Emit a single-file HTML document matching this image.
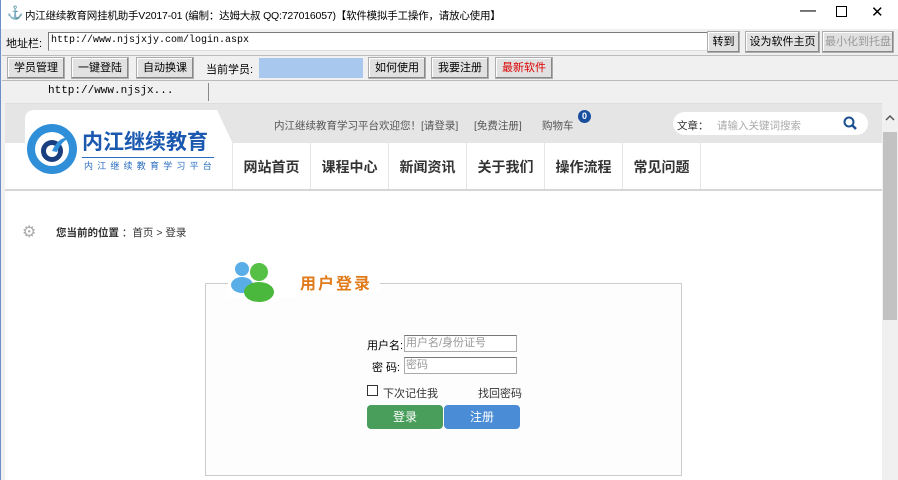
<!DOCTYPE html><html><head><meta charset="utf-8"><style>
*{margin:0;padding:0;box-sizing:border-box}
body{width:898px;height:480px;overflow:hidden;background:#f0f0f0;font-family:"Liberation Sans","Noto Sans CJK SC",sans-serif;font-size:12px;color:#000;position:relative}
.a{position:absolute;white-space:nowrap}
.btn{position:absolute;white-space:nowrap;height:22px;border:1px solid #adadad;background:#e1e1e1;box-shadow:inset -1px -1px 0 #888,inset 1px 1px 0 #fff;text-align:center;line-height:20px;font-size:11px;overflow:hidden}
.nav{position:absolute;top:143px;height:47px;width:78px;border-right:1px solid #e6e6e6;font-size:14px;font-weight:bold;color:#333;text-align:center;line-height:48px}
.gs{color:#555;font-size:10.5px}
</style></head><body>
<div class="a" style="left:0;top:0;width:898px;height:29px;background:#fff"></div>
<div class="a" style="left:0;top:0;width:1px;height:480px;background:#6a8fc8"></div>
<div class="a" style="left:7px;top:5px;font-size:13px;color:#1a4fa0">⚓</div>
<div class="a" style="left:25px;top:8px;font-size:10.5px;letter-spacing:-0.2px">内江继续教育网挂机助手V2017-01 (编制：达姆大叔 QQ:727016057)【软件模拟手工操作，请放心使用】</div>
<div class="a" style="left:800px;top:2px;font-size:16px">—</div>
<div class="a" style="left:836px;top:6px;width:11px;height:11px;border:1px solid #000"></div>
<div class="a" style="left:871px;top:3px;font-size:15px">✕</div>
<div class="a" style="left:6px;top:35px;font-size:11px">地址栏:</div>
<div class="a" style="left:48px;top:32px;width:660px;height:19px;background:#fff;border:1px solid #7a7a7a;border-right-color:#ddd;border-bottom-color:#ddd;font-family:'Liberation Mono',monospace;font-size:10px;padding:2px 2px">http://www.njsjxjy.com/login.aspx</div>
<div class="btn" style="left:707px;top:31px;width:33px">转到</div>
<div class="btn" style="left:745px;top:31px;width:75px">设为软件主页</div>
<div class="btn" style="left:822px;top:31px;width:72px;color:#999">最小化到托盘</div>
<div class="a" style="left:2px;top:55px;width:896px;height:26px;border-top:1px solid #bbb;border-bottom:1px solid #bbb"></div>
<div class="btn" style="left:7px;top:57px;width:58px">学员管理</div>
<div class="btn" style="left:71px;top:57px;width:58px">一键登陆</div>
<div class="btn" style="left:136px;top:57px;width:58px">自动换课</div>
<div class="a" style="left:206px;top:61px;font-size:11px">当前学员:</div>
<div class="a" style="left:259px;top:58px;width:104px;height:20px;background:#a8c8ee"></div>
<div class="btn" style="left:368px;top:57px;width:58px">如何使用</div>
<div class="btn" style="left:431px;top:57px;width:58px">我要注册</div>
<div class="btn" style="left:495px;top:57px;width:58px;color:#d00">最新软件</div>
<div class="a" style="left:48px;top:85px;font-family:'Liberation Mono',monospace;font-size:11px">http://www.njsjx...</div>
<div class="a" style="left:208px;top:83px;width:1px;height:18px;background:#888"></div>
<div class="a" style="left:5px;top:103px;width:877px;height:377px;background:#fff;border-top:1px solid #ddd"></div>
<div class="a" style="left:5px;top:104px;width:877px;height:39px;background:#e5e5e5"></div>
<svg class="a" style="left:5px;top:104px" width="240" height="88"><path d="M20 88 L20 14 Q21 6 30 6 L212 6 L228 40 L228 88 Z" fill="#fff"/></svg>
<svg class="a" style="left:25px;top:122px" width="54" height="54"><circle cx="27" cy="27" r="25" fill="#2f8fd8"/><circle cx="27" cy="27" r="17" fill="#fff"/><circle cx="27" cy="29" r="11" fill="#1a3f80"/><circle cx="27" cy="29" r="6" fill="#fff"/><path d="M27 29 Q34 14 44 16 Q36 20 32 30Z" fill="#2f8fd8"/></svg>
<div class="a" style="left:82px;top:126px;font-size:21px;font-weight:bold;color:#1b58b0;letter-spacing:0px">内江继续教育</div>
<div class="a" style="left:82px;top:157px;width:132px;height:1px;background:#2a6ec0"></div>
<div class="a" style="left:84px;top:159px;font-size:9px;color:#2a6ec0;letter-spacing:4.2px">内江继续教育学习平台</div>
<div class="a gs" style="left:274px;top:118px">内江继续教育学习平台欢迎您！[请登录]</div>
<div class="a gs" style="left:474px;top:118px">[免费注册]</div>
<div class="a gs" style="left:542px;top:118px">购物车</div>
<div class="a" style="left:578px;top:110px;width:13px;height:13px;border-radius:50%;background:#1a4fa0;color:#fff;font-size:9px;text-align:center;line-height:13px;font-weight:bold">0</div>
<div class="a" style="left:673px;top:112px;width:195px;height:23px;background:#fff;border-radius:12px"></div>
<div class="a" style="left:677px;top:118px;font-size:10.5px;color:#333">文章：</div>
<div class="a" style="left:717px;top:118px;font-size:10.5px;color:#aaa">请输入关键词搜索</div>
<svg class="a" style="left:842px;top:115px" width="16" height="16"><circle cx="7" cy="7" r="4.5" stroke="#1a4f90" stroke-width="2" fill="none"/><path d="M10 10 L14 14" stroke="#1a4f90" stroke-width="2.5"/></svg>
<div class="a" style="left:232px;top:143px;width:1px;height:47px;background:#e6e6e6"></div>
<div class="nav" style="left:233px">网站首页</div><div class="nav" style="left:311px">课程中心</div><div class="nav" style="left:389px">新闻资讯</div><div class="nav" style="left:467px">关于我们</div><div class="nav" style="left:545px">操作流程</div><div class="nav" style="left:623px">常见问题</div>
<div class="a" style="left:5px;top:189px;width:877px;height:2px;background:#d6d6d6"></div>
<div class="a" style="left:22px;top:222px;font-size:16px;color:#aaa">⚙</div>
<div class="a" style="left:56px;top:225px;font-size:10.5px;color:#333"><b>您当前的位置</b> ：首页 &gt; 登录</div>
<div class="a" style="left:205px;top:283px;width:477px;height:193px;border:1px solid #ccc;background:#fdfdfd"></div>
<div class="a" style="left:228px;top:258px;width:70px;height:40px;background:#fff"></div>
<svg class="a" style="left:229px;top:257px" width="50" height="45"><circle cx="13" cy="12" r="7" fill="#5aaee8"/><ellipse cx="13" cy="28" rx="11" ry="8" fill="#5aaee8"/><circle cx="30" cy="15" r="9" fill="#55c045"/><ellipse cx="30" cy="35" rx="15" ry="10" fill="#4ab83c"/></svg>
<div class="a" style="left:296px;top:268px;width:84px;height:24px;background:#fff"></div>
<div class="a" style="left:300px;top:270px;font-size:16px;font-weight:bold;color:#e07a1a;letter-spacing:2px">用户登录</div>
<div class="a" style="left:367px;top:337px;font-size:11px">用户名:</div>
<div class="a" style="left:404px;top:335px;width:113px;height:17px;border:1px solid #aaa;border-top-color:#777;background:#fff;font-size:11px;color:#999;line-height:15px;padding-left:1px">用户名/身份证号</div>
<div class="a" style="left:372px;top:359px;font-size:11px">密 码:</div>
<div class="a" style="left:404px;top:357px;width:113px;height:17px;border:1px solid #aaa;border-top-color:#777;background:#fff;font-size:11px;color:#999;line-height:15px;padding-left:1px">密码</div>
<div class="a" style="left:367px;top:385px;width:11px;height:11px;border:1px solid #333;background:#fff"></div>
<div class="a" style="left:383px;top:385px;font-size:11px;color:#333">下次记住我</div>
<div class="a" style="left:478px;top:385px;font-size:11px;color:#333">找回密码</div>
<div class="a" style="left:367px;top:405px;width:76px;height:24px;background:#4a9e5c;border-radius:4px;color:#fff;text-align:center;line-height:24px;font-size:12px">登录</div>
<div class="a" style="left:444px;top:405px;width:76px;height:24px;background:#4a8cd6;border-radius:4px;color:#fff;text-align:center;line-height:24px;font-size:12px">注册</div>
<div class="a" style="left:882px;top:104px;width:16px;height:376px;background:#f0f0f0"></div>
<svg class="a" style="left:885px;top:114px" width="10" height="8"><path d="M1 6 L5 2 L9 6" stroke="#555" stroke-width="1.5" fill="none"/></svg>
<div class="a" style="left:883px;top:132px;width:14px;height:188px;background:#c2c2c2"></div>
</body></html>
